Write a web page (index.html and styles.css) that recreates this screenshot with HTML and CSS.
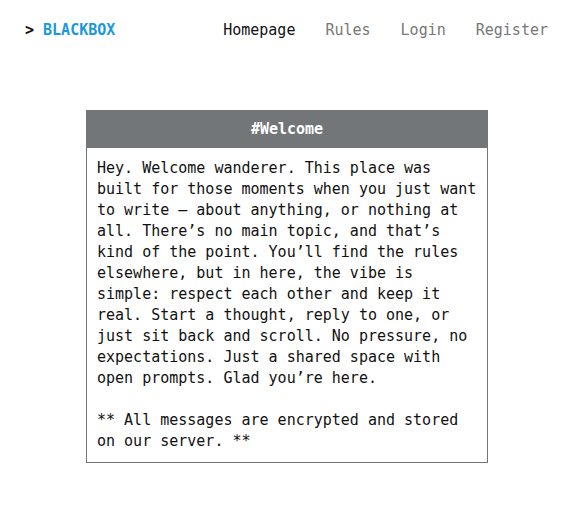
FILE: index.html
```html
<!DOCTYPE html>
<html lang="en">
<head>
<meta charset="utf-8">
<title>BLACKBOX</title>
<link rel="stylesheet" href="styles.css">
</head>
<body>
<header class="topbar">
  <div class="logo"><span class="prompt">&gt;</span> <span class="brand">BLACKBOX</span></div>
  <nav class="nav">
    <a class="nav-link active" href="#">Homepage</a>
    <a class="nav-link" href="#">Rules</a>
    <a class="nav-link" href="#">Login</a>
    <a class="nav-link" href="#">Register</a>
  </nav>
</header>
<main class="main">
  <section class="card">
    <h2 class="card-title">#Welcome</h2>
    <div class="card-body">
      <p class="para">Hey. Welcome wanderer. This place was built for those moments when you just want to write — about anything, or nothing at all. There’s no main topic, and that’s kind of the point. You’ll find the rules elsewhere, but in here, the vibe is simple: respect each other and keep it real. Start a thought, reply to one, or just sit back and scroll. No pressure, no expectations. Just a shared space with open prompts. Glad you’re here.</p>
      <p class="para">** All messages are encrypted and stored on our server. **</p>
    </div>
  </section>
</main>
</body>
</html>
```
FILE: styles.css
```css
* { box-sizing: border-box; }
body {
  margin: 0;
  background: #ffffff;
  font-family: "DejaVu Sans Mono", "Liberation Mono", monospace;
  color: #111;
}
.topbar {
  display: flex;
  justify-content: space-between;
  align-items: center;
  padding: 20px 26px 20px 25px;
  font-size: 15px;
  line-height: 20px;
}
.logo { font-weight: bold; }
.prompt { color: #111; }
.brand { color: #1b97e0; }
.nav { display: flex; gap: 30px; }
.nav-link { color: #777; text-decoration: none; }
.nav-link.active { color: #111; }
.main { display: flex; justify-content: center; padding-top: 50px; }
.card {
  width: 402px;
  border: 1px solid #737678;
}
.card-title {
  margin: 0;
  background: #737678;
  color: #fff;
  text-align: center;
  font-size: 15px;
  font-weight: bold;
  line-height: 21px;
  padding: 8px 0 8px;
}
.card-body {
  padding: 10px 10px 10px;
  font-size: 15px;
  line-height: 21px;
}
.para { margin: 0; }
.para + .para { margin-top: 21px; }
```
